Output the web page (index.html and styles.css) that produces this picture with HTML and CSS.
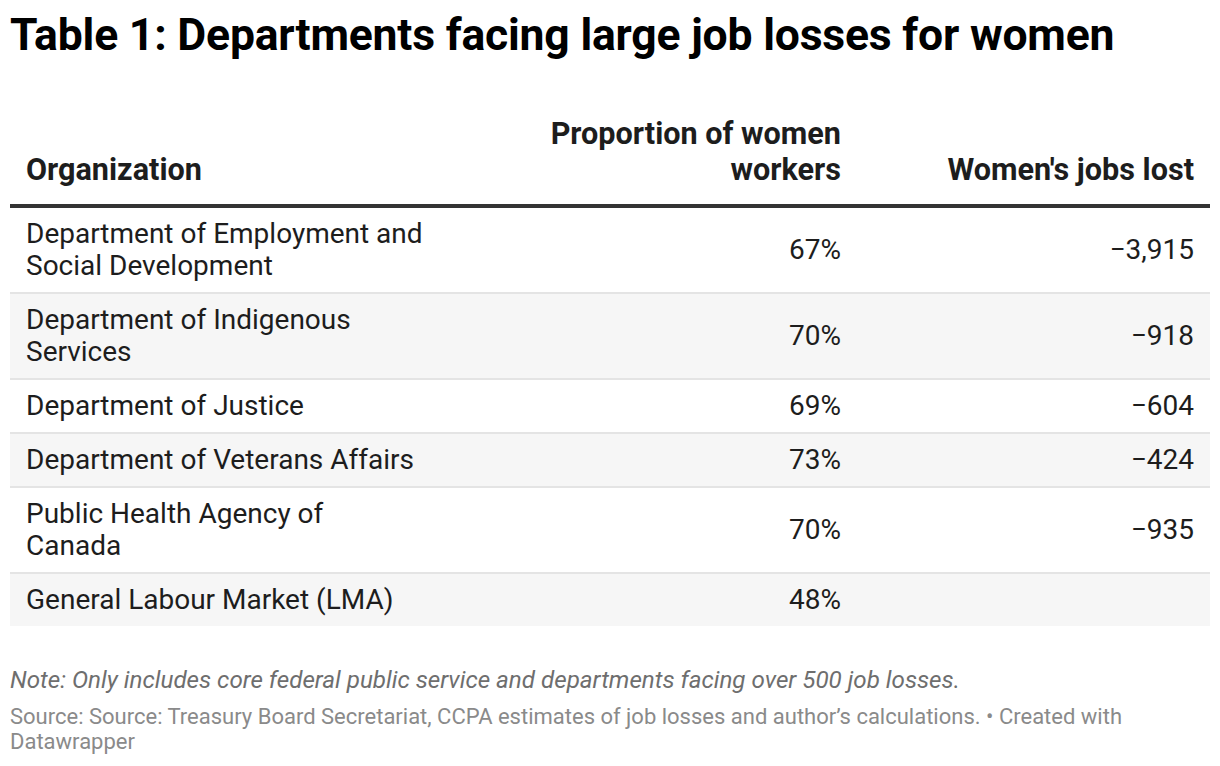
FILE: index.html
```html
<!DOCTYPE html>
<html>
<head>
<meta charset="utf-8">
<link rel="stylesheet" href="styles.css">
</head>
<body>
<div class="chart">
  <h1 class="title">Table 1: Departments facing large job losses for women</h1>
  <table class="data">
    <colgroup>
      <col class="c-org">
      <col class="c-prop">
      <col class="c-lost">
    </colgroup>
    <thead>
      <tr>
        <th class="left">Organization</th>
        <th class="num">Proportion of women<br>workers</th>
        <th class="num">Women's jobs lost</th>
      </tr>
    </thead>
    <tbody>
      <tr>
        <td>Department of Employment and<br>Social Development</td>
        <td class="num">67%</td>
        <td class="num">−3,915</td>
      </tr>
      <tr class="alt">
        <td>Department of Indigenous<br>Services</td>
        <td class="num">70%</td>
        <td class="num">−918</td>
      </tr>
      <tr>
        <td>Department of Justice</td>
        <td class="num">69%</td>
        <td class="num">−604</td>
      </tr>
      <tr class="alt">
        <td>Department of Veterans Affairs</td>
        <td class="num">73%</td>
        <td class="num">−424</td>
      </tr>
      <tr>
        <td>Public Health Agency of<br>Canada</td>
        <td class="num">70%</td>
        <td class="num">−935</td>
      </tr>
      <tr class="alt">
        <td>General Labour Market (LMA)</td>
        <td class="num">48%</td>
        <td class="num"></td>
      </tr>
    </tbody>
  </table>
  <div class="footer">
    <p class="note">Note: Only includes core federal public service and departments facing over 500 job losses.</p>
    <p class="source">Source: Source: Treasury Board Secretariat, CCPA estimates of job losses and author’s calculations. • Created with Datawrapper</p>
  </div>
</div>
</body>
</html>
```

FILE: styles.css
```css
html, body {
  margin: 0;
  padding: 0;
  background: #ffffff;
}

body {
  font-family: Roboto, "Liberation Sans", sans-serif;
  color: #1d1d1d;
}

.chart {
  padding: 7px 10px 0 10px;
}

.title {
  margin: 0;
  font-size: 44.5px;
  line-height: 56px;
  font-weight: 700;
  color: #000000;
  letter-spacing: -0.2px;
}

.data {
  width: 100%;
  margin-top: 53px;
  border-collapse: collapse;
  table-layout: fixed;
}

.c-org { width: 523px; }
.c-prop { width: 324px; }
.c-lost { width: 353px; }

.data th {
  font-size: 30.6px;
  line-height: 36px;
  font-weight: 700;
  color: #1d1d1d;
  vertical-align: bottom;
  padding: 0 16px 16px 16px;
  border-bottom: 4px solid #333333;
}

.data th.left { text-align: left; }

.data td {
  font-size: 28px;
  line-height: 32px;
  padding: 10px 16px;
  border-bottom: 2px solid #e4e4e4;
  vertical-align: middle;
  color: #1d1d1d;
}

.data tbody tr:last-child td {
  border-bottom: none;
}

.data tr.alt td {
  background: #f6f6f6;
}

.num {
  text-align: right;
}

.footer {
  margin-top: 40px;
}

.note {
  margin: 0;
  font-size: 24.2px;
  line-height: 28px;
  font-style: italic;
  color: #6e6e6e;
}

.source {
  margin: 10px 0 0 0;
  font-size: 22px;
  line-height: 25px;
  color: #8a8a8a;
}
```
